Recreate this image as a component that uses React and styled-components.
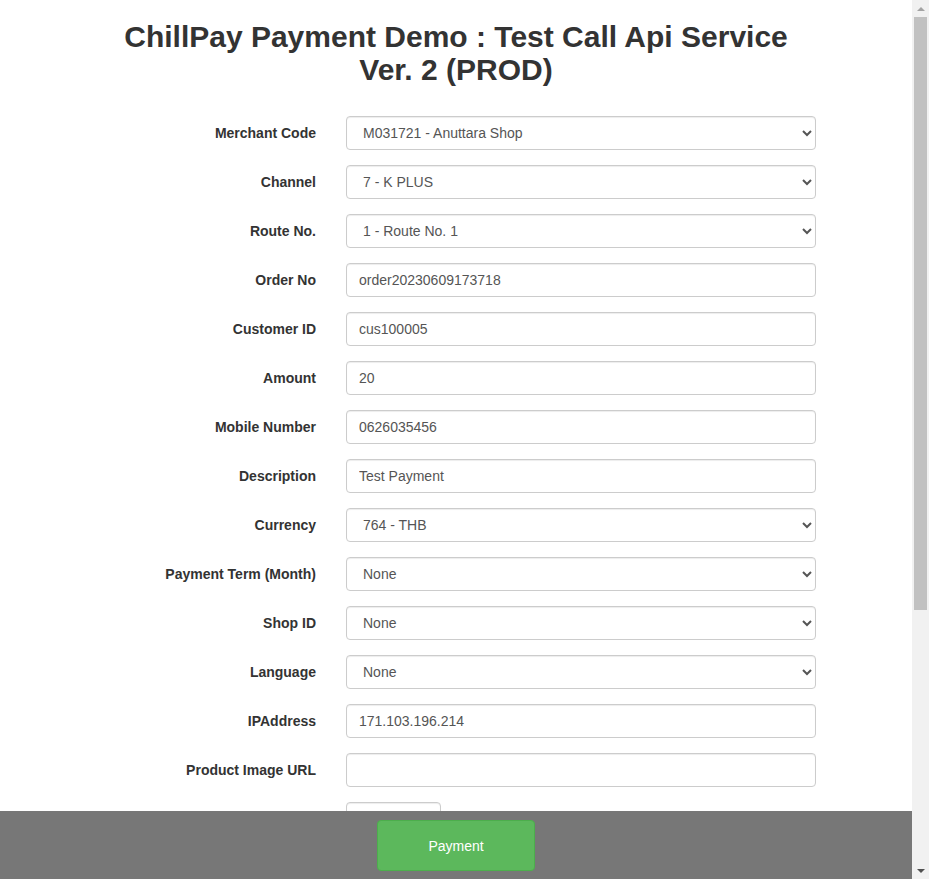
import React from "react";
import styled, { createGlobalStyle } from "styled-components";

const GlobalStyle = createGlobalStyle`
  html, body {
    margin: 0;
    padding: 0;
  }
  body {
    font-family: "Liberation Sans", Arial, Helvetica, sans-serif;
    font-size: 14px;
    line-height: 1.42857;
    color: #333;
    background: #fff;
    margin-right: 17px;
    padding-bottom: 58px;
  }
  * {
    box-sizing: border-box;
  }
`;

const Container = styled.div`
  width: 750px;
  margin: 0 auto;
  padding: 0 15px;
`;

const Title = styled.h2`
  font-size: 30px;
  font-weight: bold;
  line-height: 1.1;
  text-align: center;
  margin: 20px 0 30px;
  color: #333;
`;

const Form = styled.form`
  margin: 0 -15px;
`;

const Group = styled.div`
  display: grid;
  grid-template-columns: 250px 500px;
  margin-bottom: 15px;
`;

const Label = styled.label`
  padding: 8px 15px 0;
  text-align: right;
  font-weight: bold;
`;

const Field = styled.div`
  padding: 0 15px;
`;

const inputBase = `
  display: block;
  height: 34px;
  padding: 6px 12px;
  font-family: "Liberation Sans", Arial, Helvetica, sans-serif;
  font-size: 14px;
  line-height: 1.42857;
  color: #555;
  background: #fff;
  border: 1px solid #ccc;
  border-radius: 4px;
  box-shadow: inset 0 1px 1px rgba(0, 0, 0, 0.075);
`;

const Input = styled.input`
  ${inputBase}
  width: ${(p) => (p.$small ? "95px" : "100%")};
`;

const Select = styled.select`
  ${inputBase}
  width: 100%;
`;

const Footer = styled.div`
  position: fixed;
  left: 0;
  right: 17px;
  bottom: 0;
  height: 68px;
  background: #777;
  display: flex;
  justify-content: center;
  padding-top: 9px;
`;

const PayButton = styled.button`
  width: 158px;
  height: 51px;
  background: #5cb85c;
  border: 1px solid #4cae4c;
  border-radius: 4px;
  color: #fff;
  font-family: "Liberation Sans", Arial, Helvetica, sans-serif;
  font-size: 14px;
  cursor: pointer;
`;

/* window scrollbar as the screenshot shows it */
const ScrollBar = styled.div`
  position: fixed;
  top: 0;
  right: 0;
  width: 17px;
  height: 100vh;
  background: #f1f1f1;
  display: flex;
  flex-direction: column;
  align-items: center;
`;

const Arrow = styled.div`
  height: 17px;
  width: 17px;
  flex: none;
  display: flex;
  align-items: center;
  justify-content: center;
  &::before {
    content: "";
    border-left: 4px solid transparent;
    border-right: 4px solid transparent;
    ${(p) =>
      p.$up
        ? "border-bottom: 4px solid #a3a3a3;"
        : "border-top: 4px solid #505050;"}
  }
`;

const Track = styled.div`
  flex: 1;
  width: 100%;
  padding: 0 2px;
`;

const Thumb = styled.div`
  height: 593px;
  background: #c1c1c1;
`;

const fields = [
  { label: "Merchant Code", type: "select", value: "M031721 - Anuttara Shop" },
  { label: "Channel", type: "select", value: "7 - K PLUS" },
  { label: "Route No.", type: "select", value: "1 - Route No. 1" },
  { label: "Order No", value: "order20230609173718" },
  { label: "Customer ID", value: "cus100005" },
  { label: "Amount", value: "20" },
  { label: "Mobile Number", value: "0626035456" },
  { label: "Description", value: "Test Payment" },
  { label: "Currency", type: "select", value: "764 - THB" },
  { label: "Payment Term (Month)", type: "select", value: "None" },
  { label: "Shop ID", type: "select", value: "None" },
  { label: "Language", type: "select", value: "None" },
  { label: "IPAddress", value: "171.103.196.214" },
  { label: "Product Image URL", value: "" },
  { label: "Expire Time", value: "", small: true },
  { label: "Custom Route", value: "" },
  { label: "Token Type", type: "select", value: "None" },
  { label: "Credit Token", value: "" },
  { label: "Card Type", type: "select", value: "None" },
  { label: "Customer Name", value: "" },
  { label: "Customer Email", value: "" },
  { label: "Checksum", value: "" },
];

export default function App() {
  return (
    <>
      <GlobalStyle />
      <Container>
        <Title>ChillPay Payment Demo : Test Call Api Service Ver. 2 (PROD)</Title>
        <Form onSubmit={(e) => e.preventDefault()}>
          {fields.map((f) => (
            <Group key={f.label}>
              <Label>{f.label}</Label>
              <Field>
                {f.type === "select" ? (
                  <Select defaultValue={f.value}>
                    <option>{f.value}</option>
                  </Select>
                ) : (
                  <Input type="text" defaultValue={f.value} $small={f.small} />
                )}
              </Field>
            </Group>
          ))}
        </Form>
      </Container>
      <Footer>
        <PayButton type="button">Payment</PayButton>
      </Footer>
      <ScrollBar>
        <Arrow $up />
        <Track>
          <Thumb />
        </Track>
        <Arrow />
      </ScrollBar>
    </>
  );
}
